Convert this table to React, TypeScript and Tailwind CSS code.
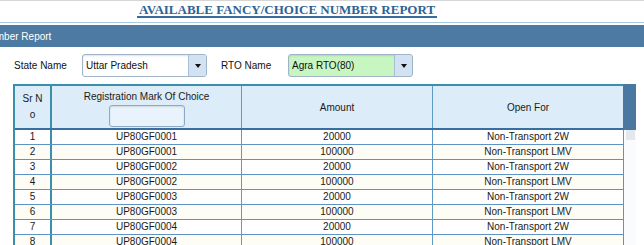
import React from "react";

interface Row {
  sr: number;
  mark: string;
  amount: string;
  openFor: string;
}

const rows: Row[] = [
  { sr: 1, mark: "UP80GF0001", amount: "20000", openFor: "Non-Transport 2W" },
  { sr: 2, mark: "UP80GF0001", amount: "100000", openFor: "Non-Transport LMV" },
  { sr: 3, mark: "UP80GF0002", amount: "20000", openFor: "Non-Transport 2W" },
  { sr: 4, mark: "UP80GF0002", amount: "100000", openFor: "Non-Transport LMV" },
  { sr: 5, mark: "UP80GF0003", amount: "20000", openFor: "Non-Transport 2W" },
  { sr: 6, mark: "UP80GF0003", amount: "100000", openFor: "Non-Transport LMV" },
  { sr: 7, mark: "UP80GF0004", amount: "20000", openFor: "Non-Transport 2W" },
  { sr: 8, mark: "UP80GF0004", amount: "100000", openFor: "Non-Transport LMV" },
];

const Select: React.FC<{ value: string; className?: string }> = ({ value, className }) => (
  <div
    className={
      "flex h-[23px] w-[125px] items-stretch rounded-[3px] border border-[#9fb4c9] shadow-[inset_0_1px_2px_rgba(0,0,0,0.12)] " +
      (className ?? "")
    }
  >
    <span className="flex flex-1 items-center pl-[3px] text-[10px] text-[#111]">{value}</span>
    <span className="flex w-[18px] items-center justify-center rounded-r-[2px] border-l border-[#a9bfd6] bg-[#d3e2f3]">
      {/* small down triangle */}
      <svg width="6" height="4" viewBox="0 0 6 4">
        <path d="M0 0 L6 0 L3 4 Z" fill="#111" />
      </svg>
    </span>
  </div>
);

export default function App() {
  return (
    <div className="h-[245px] w-[644px] overflow-hidden bg-white font-['Liberation_Sans',Arial,sans-serif]">
      {/* Title */}
      <div className="flex h-[22px] items-start border-t border-[#d6d6d6] pl-[137px] pt-[2px]">
        <span className="block border-b-2 border-[#3a6c9c] px-[2px] font-['Liberation_Serif',serif] text-[13px] font-bold leading-[13px] text-[#2f6392]">
          AVAILABLE FANCY/CHOICE NUMBER REPORT
        </span>
      </div>

      {/* Panel heading */}
      <div className="border-t border-[#a3cbe4] pt-[2px]">
        <div className="flex h-[22px] items-center overflow-hidden bg-[#4c7aa2]">
          <span className="-ml-[17px] whitespace-nowrap text-[10px] text-white">Number Report</span>
        </div>
      </div>

      {/* Filters */}
      <div className="mt-[7px] flex h-[23px] items-center">
        <span className="ml-[14px] w-[68px] text-[10px] text-[#111]">State Name</span>
        <Select value="Uttar Pradesh" className="bg-white" />
        <span className="ml-[14px] w-[67px] text-[10px] text-[#111]">RTO Name</span>
        <Select value="Agra RTO(80)" className="bg-[#c8f6c1]" />
      </div>

      {/* Table */}
      <div className="ml-[13px] mt-[7px] flex">
        <div className="w-[610px] border-l-2 border-[#3b8fa8] text-[10px] text-[#1a1a1a]">
          <div className="flex h-[46px] border-y-2 border-t-[#3b8fa8] border-b-[#3a6e9f] bg-[#dcecf9]">
            <div className="flex w-[37px] items-center justify-center border-r-2 border-[#3b8fa8] text-center leading-[16px]">
              <span>
                Sr N
                <br />o
              </span>
            </div>
            <div className="flex w-[190px] flex-col items-center border-r border-[#5b9bc4] pt-[5px]">
              <span className="leading-[12px]">Registration Mark Of Choice</span>
              <div className="mt-[2px] h-[22px] w-[76px] rounded-[3px] border border-[#8fa9c4] bg-[#e9f3fc] shadow-[inset_0_1px_2px_rgba(0,0,0,0.12)]" />
            </div>
            <div className="flex w-[191px] items-center justify-center border-r border-[#5b9bc4]">Amount</div>
            <div className="flex w-[190px] items-center justify-center">Open For</div>
          </div>

          {rows.map((r) => (
            <div
              key={r.sr}
              className={
                "flex h-[15px] border-b border-[#5e93c4] leading-[14px] " +
                (r.sr % 2 === 0 ? "bg-[#fdfdf6]" : "bg-white")
              }
            >
              <div className="w-[37px] border-r-2 border-[#3b8fa8] text-center">{r.sr}</div>
              <div className="w-[190px] border-r border-[#5b9bc4] text-center">{r.mark}</div>
              <div className="w-[191px] border-r border-[#5b9bc4] text-center">{r.amount}</div>
              <div className="w-[190px] text-center">{r.openFor}</div>
            </div>
          ))}
        </div>

        {/* Scroll gutter */}
        <div className="flex w-[13px] flex-col">
          <div className="h-[46px] bg-[#4a78a0]" />
          <div className="flex-1 border-l border-[#5e93c4] bg-[#fafbfd]">
            <div className="ml-[2px] h-[10px] w-[9px] bg-[#e4e8ee]" />
          </div>
        </div>
      </div>
    </div>
  );
}
